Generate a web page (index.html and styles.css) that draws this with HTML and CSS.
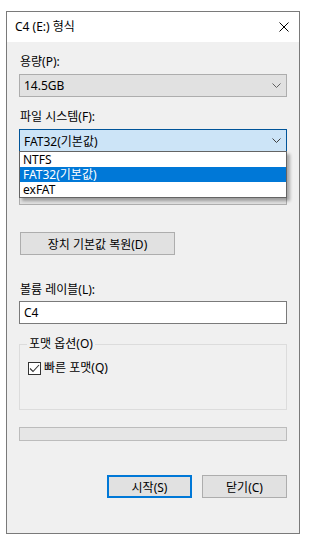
FILE: index.html
```html
<!DOCTYPE html>
<html lang="ko">
<head>
  <meta charset="UTF-8" />
  <meta name="viewport" content="width=device-width, initial-scale=1" />
  <title>C4 (E:) 형식</title>
  <link rel="stylesheet" href="styles.css">
</head>
<body>
  <div class="window">
    <div class="titlebar">
      <div class="title">C4 (E:) 형식</div>
      <svg class="close" width="10" height="10" viewBox="0 0 10 10">
        <path d="M0.5 0.5 L9.5 9.5 M9.5 0.5 L0.5 9.5" stroke="#000" stroke-width="1" fill="none" />
      </svg>
    </div>

    <div class="content">
      <div class="label first">용량(P):</div>
      <div class="combo">
        <span>14.5GB</span>
        <svg class="chevron" width="9" height="5" viewBox="0 0 9 5"><path d="M0.5 0.5 L4.5 4.5 L8.5 0.5" stroke="#606060" fill="none" /></svg>
      </div>

      <div class="label">파일 시스템(F):</div>
      <div class="combo active">
        <span>FAT32(기본값)</span>
        <svg class="chevron" width="9" height="5" viewBox="0 0 9 5"><path d="M0.5 0.5 L4.5 4.5 L8.5 0.5" stroke="#404040" fill="none" /></svg>
        <div class="dropdown">
          <div class="option">NTFS</div>
          <div class="option selected">FAT32(기본값)</div>
          <div class="option">exFAT</div>
        </div>
      </div>

      <!-- covered by the open list -->
      <div class="label third">할당 단위 크기(A):</div>
      <div class="combo under">
        <span>4096 바이트</span>
        <svg class="chevron" width="9" height="5" viewBox="0 0 9 5"><path d="M0.5 0.5 L4.5 4.5 L8.5 0.5" stroke="#606060" fill="none" /></svg>
      </div>

      <button class="btn restore">장치 기본값 복원(D)</button>

      <div class="label volume">볼륨 레이블(L):</div>
      <div class="textbox">C4</div>

      <fieldset class="group">
        <legend>포맷 옵션(O)</legend>
        <div class="check-row">
          <span class="checkbox">
            <svg width="11" height="11" viewBox="0 0 11 11"><path d="M1 5.5 L4 8.5 L10 2" stroke="#333" stroke-width="1.1" fill="none" /></svg>
          </span>
          빠른 포맷(Q)
        </div>
      </fieldset>

      <div class="progress"></div>

      <div class="actions">
        <button class="btn default">시작(S)</button>
        <button class="btn">닫기(C)</button>
      </div>
    </div>
  </div>
</body>
</html>
```

FILE: styles.css
```css
* {
  box-sizing: border-box;
  margin: 0;
  padding: 0;
}
body {
  background: #fff;
  font-family: 'Segoe UI', 'Noto Sans', 'Noto Sans CJK KR', sans-serif;
  font-size: 12px;
  color: #000;
  padding: 11px 0 0 6px;
}
.window {
  width: 294px;
  height: 523px;
  border: 1px solid #7a7a7a;
  background: #f0f0f0;
  display: flex;
  flex-direction: column;
}
.titlebar {
  height: 30px;
  background: #fff;
  display: flex;
  align-items: center;
  justify-content: space-between;
  padding: 0 10px 0 8px;
}
.title {
  line-height: 16px;
}
.content {
  padding: 0 12px;
  display: flex;
  flex-direction: column;
}
.label {
  line-height: 16px;
  margin-top: 12px;
  padding-left: 1px;
}
.label.third {
  margin-top: 10px;
  visibility: hidden;
}
.label.volume {
  margin-top: 27px;
}
.combo {
  position: relative;
  height: 23px;
  margin-top: 4px;
  background: #e1e1e1;
  border: 1px solid #adadad;
  display: flex;
  align-items: center;
  justify-content: space-between;
  padding: 0 5px 0 4px;
}
.combo.active {
  background: #cce4f7;
  border-color: #005499;
}
.combo.under span {
  visibility: hidden;
}
.chevron {
  display: block;
}
.dropdown {
  position: absolute;
  top: 21px;
  left: -1px;
  right: -1px;
  background: #fff;
  border: 1px solid #646464;
  box-shadow: 3px 3px 3px rgb(0 0 0 / 0.3);
  z-index: 10;
}
.option {
  height: 15px;
  line-height: 15px;
  padding-left: 3px;
}
.option.selected {
  background: #0078d7;
  color: #fff;
}
.btn {
  font-family: inherit;
  font-size: 12px;
  color: #000;
  height: 23px;
  background: #e1e1e1;
  border: 1px solid #adadad;
  width: 85px;
}
.btn.restore {
  width: 155px;
  margin-top: 27px;
  margin-left: 1px;
}
.btn.default {
  border: 2px solid #0078d7;
}
.textbox {
  height: 23px;
  margin-top: 3px;
  background: #fff;
  border: 1px solid #7a7a7a;
  line-height: 21px;
  padding-left: 4px;
}
.group {
  margin-top: 12px;
  border: 1px solid #dcdcdc;
  height: 74px;
  padding: 4px 8px 0;
}
.group legend {
  line-height: 16px;
  padding: 0 2px;
  margin-left: -1px;
}
.check-row {
  display: flex;
  align-items: center;
  gap: 3px;
  margin-top: 4px;
  line-height: 16px;
}
.checkbox {
  width: 13px;
  height: 13px;
  border: 1px solid #333;
  background: #fff;
  display: flex;
  align-items: center;
  justify-content: center;
}
.progress {
  height: 14px;
  margin-top: 17px;
  background: #e6e6e6;
  border: 1px solid #bcbcbc;
}
.actions {
  margin-top: 34px;
  display: flex;
  justify-content: flex-end;
  gap: 10px;
}
```
